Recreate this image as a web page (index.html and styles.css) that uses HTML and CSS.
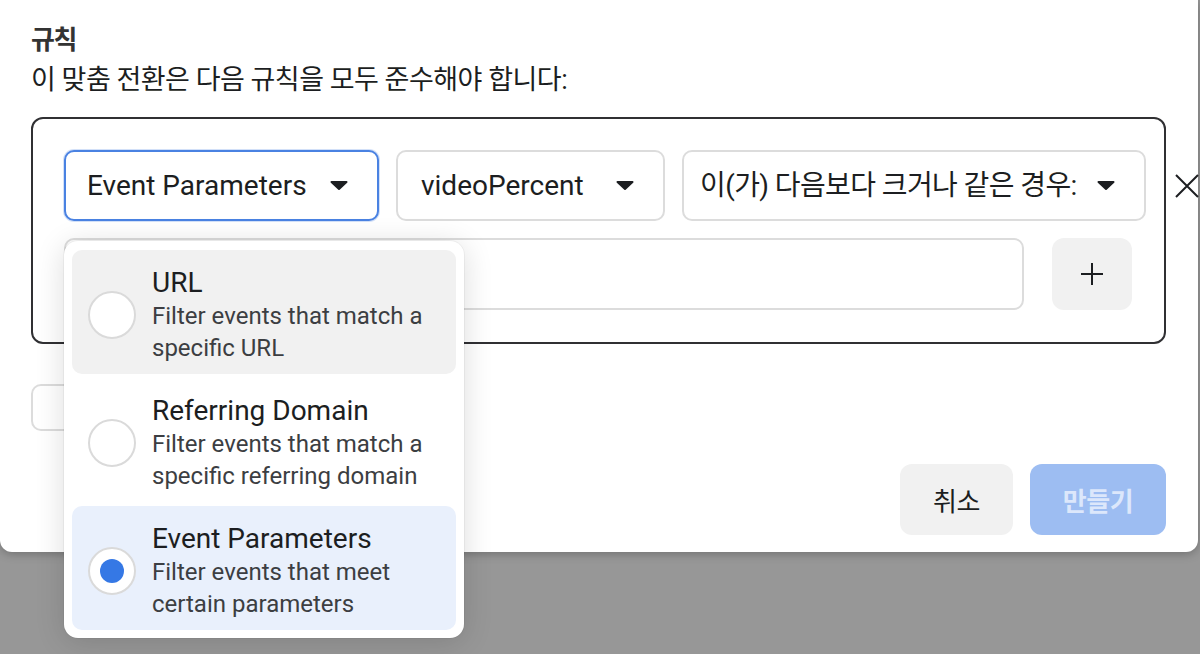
FILE: index.html
```html
<!DOCTYPE html>
<html>
<head>
  <meta charset="utf-8">
  <link rel="stylesheet" href="styles.css">
</head>
<body>
  <div class="rule-dialog">
    <div class="rule-dialog-header">
      <h2 class="rule-dialog-title">규칙</h2>
      <p class="rule-dialog-subtitle">이 맞춤 전환은 다음 규칙을 모두 준수해야 합니다:</p>
    </div>

    <div class="rule-box">
      <div class="rule-row">
        <div class="rule-select rule-select-focused rule-select-type">
          <span class="rule-select-text">Event Parameters</span>
          <svg class="rule-caret" width="20" height="11" viewBox="0 0 20 11"><path d="M2.5 2h15L10 9z" /></svg>
        </div>
        <div class="rule-select rule-select-param">
          <span class="rule-select-text">videoPercent</span>
          <svg class="rule-caret" width="20" height="11" viewBox="0 0 20 11"><path d="M2.5 2h15L10 9z" /></svg>
        </div>
        <div class="rule-select rule-select-operator">
          <span class="rule-select-text rule-korean">이(가) 다음보다 크거나 같은 경우:</span>
          <svg class="rule-caret" width="20" height="11" viewBox="0 0 20 11"><path d="M2.5 2h15L10 9z" /></svg>
        </div>
        <button class="rule-remove">
          <svg width="24" height="24" viewBox="0 0 24 24"><path d="M1 1L23 23M23 1L1 23" /></svg>
        </button>
      </div>
      <div class="rule-row">
        <div class="rule-input"></div>
        <button class="rule-add-value">
          <svg width="24" height="24" viewBox="0 0 24 24"><path d="M1 12H23M12 1V23" /></svg>
        </button>
      </div>
    </div>

    <button class="rule-add-button"></button>

    <div class="rule-dialog-footer">
      <button class="rule-cancel">취소</button>
      <button class="rule-create">만들기</button>
    </div>
  </div>

  <!-- Rule type dropdown (open) -->
  <div class="rule-dropdown">
    <div class="rule-option rule-option-hover">
      <span class="rule-radio"></span>
      <div class="rule-option-body">
        <div class="rule-option-title">URL</div>
        <div class="rule-option-desc">Filter events that match a specific URL</div>
      </div>
    </div>
    <div class="rule-option">
      <span class="rule-radio"></span>
      <div class="rule-option-body">
        <div class="rule-option-title">Referring Domain</div>
        <div class="rule-option-desc">Filter events that match a specific referring domain</div>
      </div>
    </div>
    <div class="rule-option rule-option-selected">
      <span class="rule-radio rule-radio-checked"></span>
      <div class="rule-option-body">
        <div class="rule-option-title">Event Parameters</div>
        <div class="rule-option-desc">Filter events that meet certain parameters</div>
      </div>
    </div>
  </div>
</body>
</html>
```

FILE: styles.css
```css
/* Page */
html,
body {
  height: 100%;
}

body {
  margin: 0;
  position: relative;
  background-color: #979797;
  font-family: Roboto, "Noto Sans CJK KR", sans-serif;
  color: #1c1e21;
}

button {
  font-family: inherit;
  border: none;
  padding: 0;
  cursor: pointer;
}

/* Dialog */
.rule-dialog {
  width: 1198px;
  box-sizing: border-box;
  padding: 24px 32px 17px 31px;
  background-color: #fff;
  border-radius: 0 0 12px 12px;
  box-shadow: 0 2px 10px rgba(0, 0, 0, 0.25);
}

.rule-dialog-title {
  margin: 0;
  font-size: 26px;
  line-height: 33px;
  font-weight: bold;
  letter-spacing: -1.5px;
  color: #333;
}

.rule-dialog-subtitle {
  margin: 5px 0 0;
  font-size: 27px;
  line-height: 36px;
  letter-spacing: -0.5px;
  color: #1c1e21;
}

/* Rules box */
.rule-box {
  margin-top: 19px;
  padding: 31px 18px 32px 31px;
  border: 2px solid #303033;
  border-radius: 12px;
  display: flex;
  flex-direction: column;
  gap: 17px;
}

.rule-row {
  display: flex;
  align-items: center;
  gap: 17px;
}

.rule-select {
  flex: none;
  display: flex;
  align-items: center;
  height: 71px;
  box-sizing: border-box;
  padding: 0 28px 0 21px;
  border: 2px solid #dcdcdc;
  border-radius: 10px;
  background-color: #fff;
  font-size: 28px;
  line-height: 33px;
  white-space: nowrap;
}

.rule-select-focused {
  border-color: #4a82e2;
  box-shadow: 0 0 0 1px rgba(74, 130, 226, 0.25);
}

.rule-select-type {
  width: 315px;
}

.rule-select-param {
  width: 269px;
  padding-left: 23px;
}

.rule-select-operator {
  width: 464px;
  padding-left: 16px;
}

.rule-korean {
  letter-spacing: -0.6px;
}

.rule-caret {
  flex: none;
  margin-left: auto;
  fill: #1c1e21;
  stroke: #1c1e21;
  stroke-width: 2;
  stroke-linejoin: round;
}

.rule-remove {
  flex: none;
  width: 24px;
  height: 24px;
  margin-left: 12px;
  background: none;
}

.rule-remove svg,
.rule-add-value svg {
  display: block;
  fill: none;
  stroke: #1c1e21;
  stroke-width: 2;
}

.rule-row .rule-input {
  flex: none;
  width: 960px;
  height: 72px;
  box-sizing: border-box;
  border: 2px solid #dcdcdc;
  border-radius: 10px;
}

.rule-add-value {
  flex: none;
  width: 80px;
  height: 72px;
  margin-left: 11px;
  display: flex;
  align-items: center;
  justify-content: center;
  background-color: #f1f1f1;
  border-radius: 12px;
}

/* Add rule button (mostly behind dropdown) */
.rule-add-button {
  display: block;
  margin-top: 40px;
  width: 220px;
  height: 47px;
  box-sizing: border-box;
  border: 2px solid #dcdcdc;
  border-radius: 10px;
  background-color: #fff;
}

/* Footer */
.rule-dialog-footer {
  margin-top: 33px;
  display: flex;
  justify-content: flex-end;
  gap: 17px;
}

.rule-cancel,
.rule-create {
  height: 71px;
  border-radius: 12px;
  font-size: 26px;
  letter-spacing: -0.5px;
}

.rule-cancel {
  width: 113px;
  background-color: #f1f1f1;
  color: #1c1e21;
}

.rule-create {
  width: 136px;
  background-color: #9dbdf2;
  color: #dce7fb;
  font-weight: bold;
}

/* Dropdown */
.rule-dropdown {
  position: absolute;
  left: 64px;
  top: 241px;
  z-index: 10;
  width: 400px;
  box-sizing: border-box;
  padding: 9px 8px 8px;
  display: flex;
  flex-direction: column;
  gap: 4px;
  background-color: #fff;
  border-radius: 14px;
  box-shadow: 0 4px 30px rgba(0, 0, 0, 0.14), 0 0 0 1px rgba(0, 0, 0, 0.04);
}

.rule-option {
  display: flex;
  align-items: center;
  padding: 15px 16px 10px;
  border-radius: 10px;
}

.rule-option-hover {
  background-color: #f1f1f1;
}

.rule-option-selected {
  background-color: #e9f0fc;
}

.rule-radio {
  flex: none;
  width: 48px;
  height: 48px;
  box-sizing: border-box;
  margin-right: 16px;
  border: 2px solid #dadada;
  border-radius: 50%;
  background-color: #fff;
  display: flex;
  align-items: center;
  justify-content: center;
}

.rule-radio-checked::after {
  content: "";
  width: 24px;
  height: 24px;
  border-radius: 50%;
  background-color: #3578e5;
}

.rule-option-title {
  font-size: 28px;
  line-height: 35px;
  color: #1c1e21;
}

.rule-option-desc {
  font-size: 24px;
  line-height: 32px;
  color: #3c3e42;
}
```
